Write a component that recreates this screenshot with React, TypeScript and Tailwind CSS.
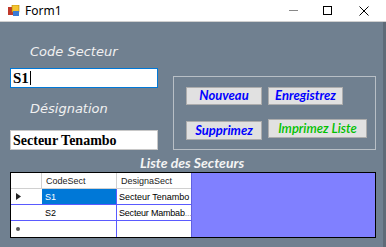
import React from "react";

const gothic = { fontFamily: "'DejaVu Sans', 'Liberation Sans', sans-serif" };
const lato = { fontFamily: "Lato, 'Liberation Sans', sans-serif" };

function Btn({ children, cls, color }: { children: React.ReactNode; cls: string; color: string }) {
  return (
    <div
      className={`flex items-center justify-center bg-[#e1e1e1] border border-[#adadad] text-[13px] italic font-bold whitespace-nowrap ${cls} ${color}`}
      style={lato}
    >
      {children}
    </div>
  );
}

export default function App() {
  return (
    <div className="w-[386px] h-[247px] overflow-hidden flex flex-col bg-[#708090] relative">
      {/* title bar */}
      <div className="h-[22px] bg-white flex items-center shrink-0 border-b border-[#d0d0d0]">
        <svg width="12" height="12" viewBox="0 0 12 12" className="ml-[8px]">
          <rect x="0" y="2" width="6" height="8" fill="#c0392b" />
          <rect x="4" y="0" width="7" height="7" fill="#f4c430" stroke="#b08000" strokeWidth="0.6" />
          <rect x="5" y="6" width="6" height="5" fill="#3a7bd5" />
        </svg>
        <span className="ml-[5px] text-[12px] text-black" style={{ fontFamily: "'Noto Sans', sans-serif" }}>
          Form1
        </span>
        <div className="ml-auto flex items-center">
          <div className="w-[34px] flex justify-center">
            <div className="w-[9px] h-[1px] bg-[#888]" />
          </div>
          <div className="w-[34px] flex justify-center">
            <div className="w-[9px] h-[9px] border border-black" />
          </div>
          <div className="w-[40px] flex justify-center">
            <svg width="10" height="10" viewBox="0 0 10 10">
              <path d="M0.5 0.5 L9.5 9.5 M9.5 0.5 L0.5 9.5" stroke="#000" strokeWidth="1" />
            </svg>
          </div>
          <div className="w-[2px]" />
        </div>
      </div>

      {/* body */}
      <div className="flex-1 flex flex-col pl-[10px] pr-[10px]">
        <div className="flex">
          {/* left column */}
          <div className="w-[148px] flex flex-col">
            <div className="mt-[22px] ml-[20px] text-[13px] italic text-[#f0f0f0] leading-[16px]" style={gothic}>
              Code Secteur
            </div>
            <div className="mt-[8px] h-[20px] bg-white border border-[#0078d7] flex items-center px-[2px] text-[15px] font-bold text-black" style={{ fontFamily: "'Liberation Serif', serif" }}>
              S1<span className="w-[1px] h-[14px] bg-black ml-[1px]" />
            </div>
            <div className="mt-[13px] ml-[20px] text-[13px] italic text-[#f0f0f0] leading-[16px]" style={gothic}>
              Désignation
            </div>
            <div className="mt-[13px] h-[20px] bg-white border border-[#c8c8c8] flex items-center px-[2px] text-[14px] font-bold text-black" style={{ fontFamily: "'Liberation Serif', serif" }}>
              Secteur Tenambo
            </div>
          </div>
          {/* group box */}
          <div className="ml-[15px] mt-[54px] w-[203px] h-[74px] border border-[#b8bfc6] relative">
            <div className="absolute left-[12px] top-[10px] flex gap-[6px]">
              <Btn cls="w-[76px] h-[18px]" color="text-[#0000ff]">Nouveau</Btn>
              <Btn cls="w-[75px] h-[18px]" color="text-[#0000ff]">Enregistrez</Btn>
            </div>
            <div className="absolute left-[12px] top-[44px] w-[76px]">
              <Btn cls="w-[76px] h-[19px]" color="text-[#0000ff]">Supprimez</Btn>
            </div>
            <div className="absolute left-[94px] top-[42px]">
              <Btn cls="w-[99px] h-[19px] !font-semibold" color="text-[#00c000]">Imprimez Liste</Btn>
            </div>
          </div>
        </div>

        <div className="mt-[5px] ml-[130px] text-[14px] italic font-bold text-[#f4f4f4] leading-[16px]" style={lato}>
          Liste des Secteurs
        </div>

        {/* grid */}
        <div className="mt-[1px] w-[366px] h-[66px] border border-black bg-[#8080ff] flex text-[9px] text-black" style={{ fontFamily: "'Liberation Sans', sans-serif" }}>
          <div className="w-[181px] shrink-0 flex flex-col bg-white border-r border-[#6060e0]">
            <div className="h-[16px] flex border-b border-[#d0d0d0]">
              <div className="w-[31px] shrink-0 border-r border-[#d0d0d0]" />
              <div className="w-[75px] shrink-0 border-r border-[#d0d0d0] pl-[4px] leading-[16px] text-[#222]">CodeSect</div>
              <div className="flex-1 min-w-0 pl-[4px] leading-[16px] text-[#222]">DesignaSect</div>
            </div>
            <div className="h-[16px] flex border-b border-[#5a5aff]">
              <div className="w-[31px] shrink-0 flex items-center pl-[5px]">
                <svg width="5" height="7" viewBox="0 0 5 7"><path d="M0 0 L5 3.5 L0 7 Z" fill="#222" /></svg>
              </div>
              <div className="w-[75px] shrink-0 bg-[#0078d7] text-white pl-[3px] leading-[16px] border-r border-[#5a5aff]">S1</div>
              <div className="flex-1 min-w-0 pl-[2px] leading-[16px] whitespace-nowrap">Secteur Tenambo</div>
            </div>
            <div className="h-[16px] flex border-b border-[#5a5aff]">
              <div className="w-[31px] shrink-0" />
              <div className="w-[75px] shrink-0 pl-[3px] leading-[16px] border-r border-[#5a5aff]">S2</div>
              <div className="flex-1 min-w-0 pl-[2px] leading-[16px] whitespace-nowrap tracking-[-0.2px]">Secteur Mambab<span className="text-[#999]">...</span></div>
            </div>
            <div className="flex-1 flex">
              <div className="w-[31px] shrink-0 flex items-center pl-[5px]">
                <div className="w-[4px] h-[4px] bg-[#555] rounded-full" />
              </div>
              <div className="w-[75px] shrink-0 border-r border-[#5a5aff]" />
              <div className="flex-1" />
            </div>
          </div>
          <div className="flex-1" />
        </div>
      </div>
      <div className="absolute right-0 top-[22px] bottom-0 w-[3px] bg-[#5e6b78]" />
    </div>
  );
}
